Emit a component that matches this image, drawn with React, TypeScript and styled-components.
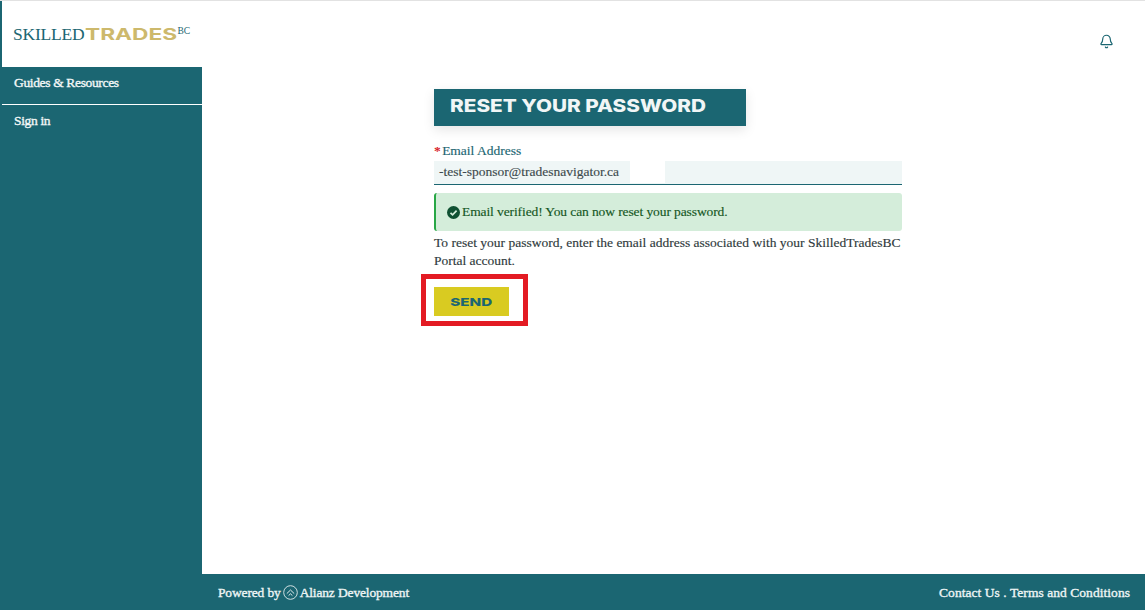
import styled, { createGlobalStyle } from "styled-components";
import { Bell } from "lucide-react";

const TEAL = "#1b6672";

const GlobalStyle = createGlobalStyle`
  html, body {
    margin: 0;
    padding: 0;
    background: #fff;
  }
  * {
    box-sizing: border-box;
  }
`;

export default function App() {
  return (
    <>
      <GlobalStyle />
      <Page>
        <Sidebar>
          <LogoArea>
            <LogoSerif>SKILLED</LogoSerif>
            <LogoWide>TRADES</LogoWide>
            <LogoSup>BC</LogoSup>
          </LogoArea>
          <Nav>
            <NavItem $divided>Guides &amp; Resources</NavItem>
            <NavItem>Sign in</NavItem>
          </Nav>
        </Sidebar>

        <Main>
          <TopBar>
            <Bell size={15} strokeWidth={1.9} color="#1b6672" />
          </TopBar>
          <Content>
            <Form>
              <Heading>
                <HeadingText>RESET YOUR PASSWORD</HeadingText>
              </Heading>
              <Label>
                <Required>*</Required> Email Address
              </Label>
              <InputRow>
                <InputValue>-test-sponsor@tradesnavigator.ca</InputValue>
                <InputGap />
              </InputRow>
              <Alert>
                <CheckCircle />
                Email verified! You can now reset your password.
              </Alert>
              <HelpText>
                To reset your password, enter the email address associated with your SkilledTradesBC Portal account.
              </HelpText>
              <Highlight>
                <SendButton>
                  <SendText>SEND</SendText>
                </SendButton>
              </Highlight>
            </Form>
          </Content>
        </Main>

        <Footer>
          <FooterGroup $spacing={-0.15}>
            Powered by
            <AlianzMark />
            Alianz Development
          </FooterGroup>
          <FooterGroup $spacing={0.05}>Contact Us . Terms and Conditions</FooterGroup>
        </Footer>
      </Page>
    </>
  );
}

function CheckCircle() {
  return (
    <svg width="13" height="13" viewBox="0 0 13 13" style={{ flexShrink: 0 }}>
      <circle cx="6.5" cy="6.5" r="6.5" fill="#0f5132" />
      <path d="M3.5 6.8 L5.6 8.9 L9.6 4.6" fill="none" stroke="#d4edda" strokeWidth="1.7" />
    </svg>
  );
}

function AlianzMark() {
  return (
    <svg width="15" height="15" viewBox="0 0 15 15" style={{ flexShrink: 0 }}>
      <circle cx="7.5" cy="7.5" r="6.8" fill="none" stroke="#e4eeee" strokeWidth="0.9" />
      <path d="M3.8 8.6 L7.5 5 L11.2 8.6 M5.6 10.6 L7.5 8.8 L9.4 10.6" fill="none" stroke="#e4eeee" strokeWidth="1" />
    </svg>
  );
}

const Page = styled.div`
  display: grid;
  grid-template-columns: 202px 1fr;
  grid-template-rows: 573px 36px;
  width: 1145px;
  height: 610px;
  overflow: hidden;
  border-top: 1px solid #e2e2e2;
  font-family: "Liberation Serif", "Times New Roman", serif;
`;

const Sidebar = styled.aside`
  display: flex;
  flex-direction: column;
  border-left: 2px solid ${TEAL};
  grid-row: 1 / 3;
`;

const LogoArea = styled.div`
  display: flex;
  align-items: flex-start;
  height: 66px;
  padding: 24px 0 0 11px;
  line-height: 18px;
`;

const LogoSerif = styled.span`
  color: ${TEAL};
  font-size: 17.5px;
  letter-spacing: -0.2px;
`;

const LogoWide = styled.span`
  display: inline-block;
  width: 65px;
  margin-right: 27px;
  color: #cdb96c;
  font-family: Inter, sans-serif;
  font-size: 16px;
  font-weight: 700;
  white-space: nowrap;
  transform: scaleX(1.42);
  transform-origin: left;
`;

const LogoSup = styled.span`
  color: ${TEAL};
  font-size: 9.5px;
  line-height: 12px;
  margin-left: 1px;
`;

const Nav = styled.nav`
  flex: 1;
  display: flex;
  flex-direction: column;
  background: ${TEAL};
`;

const NavItem = styled.a<{ $divided?: boolean }>`
  display: block;
  height: ${(props) => (props.$divided ? "38px" : "36px")};
  padding: 8px 12px 0;
  color: #f2f7f7;
  font-size: 13.5px;
  letter-spacing: -0.35px;
  line-height: 16px;
  -webkit-text-stroke: 0.35px #f2f7f7;
  border-bottom: ${(props) => (props.$divided ? "1px solid #fff" : "none")};
`;

const Main = styled.main`
  display: flex;
  flex-direction: column;
  min-width: 0;
`;

const TopBar = styled.header`
  display: flex;
  justify-content: flex-end;
  height: 88px;
  padding: 33px 31px 0 0;
`;

const Content = styled.div`
  display: flex;
  padding-left: 232px;
`;

const Form = styled.section`
  display: flex;
  flex-direction: column;
  align-items: flex-start;
  width: 468px;
`;

const Heading = styled.h1`
  width: 312px;
  height: 37px;
  margin: 0 0 17px;
  padding: 0 0 0 16px;
  background: ${TEAL};
  font-size: inherit;
  line-height: 35px;
  box-shadow: 0 4px 12px rgba(0, 0, 0, 0.1);
`;

const HeadingText = styled.span`
  display: inline-block;
  color: #f1f6f6;
  font-family: Inter, sans-serif;
  font-size: 17px;
  font-weight: 800;
  white-space: nowrap;
  transform: scaleX(1.22);
  transform-origin: left;
`;

const Label = styled.label`
  color: ${TEAL};
  font-size: 13.5px;
  line-height: 15px;
  margin-bottom: 3px;
  -webkit-text-stroke: 0.15px ${TEAL};
`;

const Required = styled.span`
  margin-right: -2px;
  color: #d8232a;
  font-weight: 700;
  -webkit-text-stroke: 0;
`;

const InputRow = styled.div`
  display: flex;
  width: 100%;
  height: 24px;
  background: #eff6f6;
  border-bottom: 1px solid ${TEAL};
`;

const InputValue = styled.span`
  width: 196px;
  padding-left: 5px;
  color: #3d4a4d;
  font-size: 13.5px;
  line-height: 22px;
  white-space: nowrap;
  -webkit-text-stroke: 0.15px #3d4a4d;
`;

const InputGap = styled.span`
  width: 35px;
  height: 22px;
  background: #fff;
`;

const Alert = styled.div`
  display: flex;
  align-items: center;
  gap: 2px;
  width: 100%;
  height: 38px;
  margin-top: 8px;
  padding-left: 11px;
  background: #d4edda;
  border-left: 2px solid #28a745;
  border-radius: 3px;
  color: #155724;
  font-size: 13.5px;
  letter-spacing: -0.1px;
  -webkit-text-stroke: 0.15px #155724;
`;

const HelpText = styled.p`
  margin: 3px 0 0;
  width: 100%;
  color: #2f3a3c;
  font-size: 13.5px;
  line-height: 18px;
  -webkit-text-stroke: 0.15px #2f3a3c;
`;

const Highlight = styled.div`
  display: flex;
  margin: 4px 0 0 -13px;
  padding: 8px 14px 5px 8px;
  border: 5px solid #e31b23;
`;

const SendButton = styled.button`
  width: 75px;
  height: 29px;
  padding: 0;
  border: none;
  background: #d9cb21;
`;

const SendText = styled.span`
  display: inline-block;
  color: ${TEAL};
  font-family: Inter, sans-serif;
  font-size: 11px;
  font-weight: 800;
  transform: scaleX(1.38);
`;

const Footer = styled.footer`
  display: flex;
  justify-content: space-between;
  align-items: center;
  padding: 1px 15px 0 16px;
  background: ${TEAL};
  color: #eef5f5;
  font-size: 13.5px;
  -webkit-text-stroke: 0.35px #eef5f5;
`;

const FooterGroup = styled.div<{ $spacing: number }>`
  display: flex;
  align-items: center;
  gap: 2px;
  letter-spacing: ${(props) => props.$spacing}px;
`;
